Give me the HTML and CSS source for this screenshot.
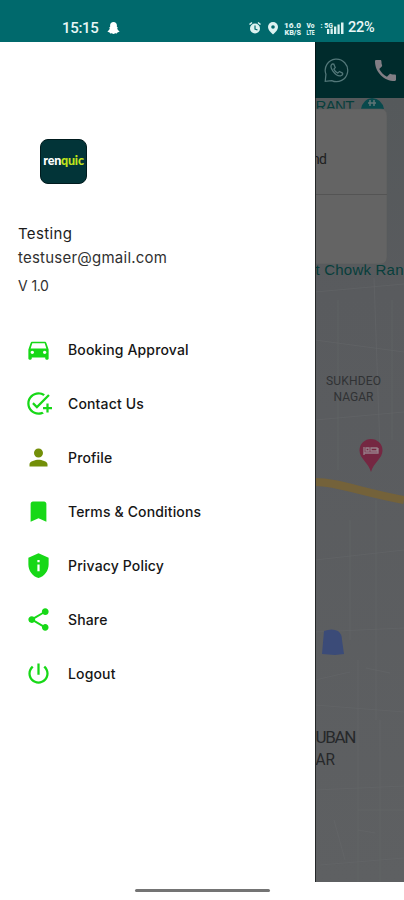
FILE: index.html
```html
<!DOCTYPE html>
<html lang="en">
<head>
<meta charset="utf-8">
<title>renquic</title>
<link rel="stylesheet" href="styles.css">
</head>
<body>
<div class="screen">
  <header class="status">
    <span class="clock">15:15</span>
    <svg class="ghost" viewBox="0 0 12 12"><path d="M6 0C3.900 0 2.600 1.500 2.600 3.200V5L1.600 5.600 2.300 6.500C2 7.700 1.200 8.500 0 9.200.2 10 1.300 10.300 2.100 10.500L2.700 11.400 4.400 11.300C5 11.700 5.400 12 6 12S7 11.700 7.600 11.300L9.300 11.400 9.900 10.500C10.700 10.300 11.800 10 12 9.200 10.800 8.500 10 7.700 9.700 6.500L10.400 5.600 9.400 5V3.200C9.400 1.500 8.100 0 6 0z"/></svg>
    <svg class="signals" viewBox="248 20 98 16">
      <circle cx="255" cy="28.500" r="5"/><path class="line" d="M249.500 24.500 252 22.500M258 22.500 260.500 24.500"/><path class="cut" d="M255 25.500V29L257.500 30"/>
      <path d="M273 22a5 5 0 0 0-5 5c0 3.500 5 7.500 5 7.500s5-4 5-7.500a5 5 0 0 0-5-5z"/><circle class="hole" cx="273" cy="27" r="1.800"/>
      <text class="rate" x="284" y="28" textLength="17" lengthAdjust="spacingAndGlyphs">16.0</text><text x="284.500" y="34.500" textLength="16.500" lengthAdjust="spacingAndGlyphs">KB/S</text>
      <text x="306.500" y="28" textLength="8" lengthAdjust="spacingAndGlyphs">Vo</text><text x="306.500" y="34.500" textLength="8" lengthAdjust="spacingAndGlyphs">LTE</text>
      <text x="320.500" y="27.500" textLength="12.500" lengthAdjust="spacingAndGlyphs">: 5G</text>
      <path d="M327 29h2.300v5H327zM330.500 28.500h2.300V34h-2.300zM334 26.500h2.300V34H334zM337.500 24.500h2.200V34h-2.200zM341 22.500h2.500V34H341z"/>
    </svg>
    <span class="battery">22%</span>
  </header>

  <div class="body">
    <nav class="drawer">
      <div class="logo"><span>ren</span><b>quic</b></div>
      <div class="name">Testing</div>
      <div class="mail">testuser@gmail.com</div>
      <div class="version">V <span>1.0</span></div>
      <ul class="menu">
        <li><svg viewBox="0 0 24 24"><path d="M18.920 6.010C18.720 5.420 18.160 5 17.500 5h-11c-.66 0-1.210.42-1.420 1.010L3 12v8c0 .55.45 1 1 1h1c.55 0 1-.45 1-1v-1h12v1c0 .55.45 1 1 1h1c.55 0 1-.45 1-1v-8l-2.080-5.990zM6.500 16c-.83 0-1.500-.67-1.500-1.500S5.670 13 6.500 13s1.500.67 1.500 1.500S7.330 16 6.500 16zm11 0c-.83 0-1.500-.67-1.500-1.500s.67-1.500 1.500-1.500 1.500.67 1.500 1.500-.67 1.500-1.500 1.500zM5 11l1.500-4.500h11L19 11H5z"/></svg><span>Booking Approval</span></li>
        <li><svg viewBox="0 0 24 24"><path d="M22 5.180 10.590 16.600l-4.240-4.240 1.410-1.410 2.830 2.830 10-10L22 5.180zM12 20c-4.410 0-8-3.590-8-8s3.590-8 8-8c1.570 0 3.040.46 4.280 1.250l1.450-1.450C16.100 2.670 14.130 2 12 2 6.480 2 2 6.480 2 12s4.480 10 10 10c1.730 0 3.360-.44 4.780-1.220l-1.500-1.500c-1 .46-2.110.72-3.280.72zm7-5h-3v2h3v3h2v-3h3v-2h-3v-3h-2v3z"/></svg><span>Contact Us</span></li>
        <li><svg class="olive" viewBox="0 0 24 24"><path d="M12 12c2.210 0 4-1.790 4-4s-1.790-4-4-4-4 1.790-4 4 1.790 4 4 4zm0 2c-2.670 0-8 1.340-8 4v2h16v-2c0-2.660-5.330-4-8-4z"/></svg><span>Profile</span></li>
        <li><svg viewBox="0 0 24 24"><path d="M17 3H7c-1.100 0-1.990.9-1.990 2L5 21l7-3 7 3V5c0-1.100-.9-2-2-2z"/></svg><span>Terms &amp; Conditions</span></li>
        <li><svg viewBox="0 0 24 24"><path d="M12 1 3 5v6c0 5.550 3.840 10.740 9 12 5.160-1.260 9-6.450 9-12V5l-9-4zm-1 6h2v2h-2V7zm0 4h2v6h-2v-6z"/></svg><span>Privacy Policy</span></li>
        <li><svg viewBox="0 0 24 24"><path d="M18 16.080c-.76 0-1.440.3-1.960.77L8.910 12.700c.05-.23.09-.46.09-.7s-.04-.47-.09-.7l7.050-4.110c.54.5 1.250.81 2.040.81 1.660 0 3-1.340 3-3s-1.340-3-3-3-3 1.340-3 3c0 .24.04.47.09.7L8.040 9.810C7.500 9.310 6.790 9 6 9c-1.660 0-3 1.340-3 3s1.340 3 3 3c.79 0 1.500-.31 2.040-.81l7.120 4.160c-.05.21-.08.43-.08.65 0 1.610 1.310 2.920 2.920 2.920s2.920-1.310 2.920-2.920-1.310-2.920-2.920-2.920z"/></svg><span>Share</span></li>
        <li><svg viewBox="0 0 24 24"><path d="M13 3h-2v10h2V3zm4.830 2.170-1.420 1.420C17.990 7.860 19 9.810 19 12c0 3.870-3.130 7-7 7s-7-3.130-7-7c0-2.190 1.010-4.140 2.580-5.420L6.170 5.170C4.230 6.820 3 9.260 3 12c0 4.970 4.030 9 9 9s9-4.030 9-9c0-2.740-1.230-5.180-3.170-6.830z"/></svg><span>Logout</span></li>
      </ul>
    </nav>

    <main class="under">
      <div class="bar">
        <svg class="wa" viewBox="0 0 26 26"><path d="M1.300 24.700 2 17.500A11.700 11.700 0 1 1 8 24z"/><path d="M8.500 6.700c-4 3 3.500 13.500 9 12.300 2-.6 2.300-2.300 1.800-2.800L16 14.500l-1.600 1.700c-2-.8-3.400-2.300-4.200-4.200l1.500-1.500-1.500-3.600z"/></svg>
        <svg class="call" viewBox="3 3 18 18"><path d="M6.620 10.790c1.440 2.830 3.760 5.140 6.590 6.590l2.200-2.200c.27-.27.67-.36 1.020-.24 1.120.37 2.330.57 3.570.57.55 0 1 .45 1 1V20c0 .55-.45 1-1 1-9.390 0-17-7.610-17-17 0-.55.45-1 1-1h3.500c.55 0 1 .45 1 1 0 1.250.2 2.450.57 3.570.11.35.03.74-.25 1.020l-2.200 2.200z"/></svg>
      </div>
      <svg class="map" viewBox="315 98 89 784">
        <defs><linearGradient id="ground" x1="0" y1="0" x2="0" y2="1"><stop offset="0" stop-color="#55595b"/><stop offset=".25" stop-color="#595b5e"/><stop offset="1" stop-color="#5e6062"/></linearGradient></defs>
        <rect x="315" y="98" width="89" height="784" fill="url(#ground)"/>
        <g class="roads"><path d="M315 292 404 284M338 300V470M374 278 380 450M315 340 404 352M392 300V440M315 420 404 412M350 520V640M376 500V720M315 560 404 550M315 632 404 628M315 680 350 672M366 668 390 673M358 660V882M315 790 404 786M380 720V882M358 810H404M334 820 345 860M315 705 404 712M358 830 375 833M320 865 404 858"/></g>
        <path class="highway" d="M315 482C338 482 360 492 404 500"/>
        <text class="teal" x="315.500" y="111" textLength="39">RANT</text><path class="tealfill" d="M361 109Q363 99 372 98Q382 99 384 109z"/><path class="glyph" d="M368 103H376M370 100V106M374 100V106"/>
        <text class="teal" x="315.500" y="275" textLength="88">t Chowk Ran</text>
        <path class="card" d="M315 109H381Q387 109 387 116V257Q387 264 380 264H315z"/><path class="rule" d="M315 194.500H387"/>
        <text class="cardtext" x="312" y="164" textLength="15">nd</text>
        <text class="area" x="326" y="385" textLength="55">SUKHDEO</text><text class="area" x="333.500" y="401" textLength="40">NAGAR</text>
        <path class="pin" d="M371 439a11.500 11.500 0 0 0-11.500 11.500c0 8 9 12 11.500 21.500 2.500-9.500 11.500-13.500 11.500-21.500A11.500 11.500 0 0 0 371 439z"/><path class="bed" d="M364 447V455M364 453H378V448M366 448H369V451H366zM371 448H377V451H371z"/>
        <path class="pond" d="M324 631Q332 628 338 631Q342 634 342 640L344 654 335 655 322 654z"/>
        <text class="town" x="315.500" y="743" textLength="41">UBAN</text><text class="town" x="315.500" y="765" textLength="19.500" lengthAdjust="spacingAndGlyphs">AR</text>
        <path class="edge" d="M315.500 98V882"/>
      </svg>
    </main>
  </div>
  <footer class="home"><i></i></footer>
</div>
</body>
</html>
```
FILE: styles.css
```css
* { box-sizing: border-box; }
body { margin: 0; background: #fff; font-family: Inter, "Liberation Sans", sans-serif; }
.screen { width: 404px; height: 900px; display: flex; flex-direction: column; overflow: hidden; }
.status { height: 42px; flex: none; background: #00696c; color: #e9f7f6; display: flex; align-items: center; padding: 14px 0 0 62px; font: 500 15px/20px Roboto, sans-serif; }
.clock { width: 45px; letter-spacing: -.3px; }
.ghost { width: 13px; height: 12px; fill: #fff; margin-right: 128px; }
.signals { width: 98px; height: 16px; fill: #dcf2f1; }
.signals text { font: 900 7px Roboto, sans-serif; }
.signals .rate { font-size: 8px; }
.signals .line { stroke: #dcf2f1; stroke-width: 1.6; fill: none; }
.signals .cut { stroke: #00696c; stroke-width: 1.2; fill: none; }
.signals .hole { fill: #00696c; }
.battery { margin-left: 2px; font-size: 14.5px; letter-spacing: -.3px; }
.body { height: 840px; display: flex; flex: none; }
.drawer { width: 315px; background: #fff; padding: 97px 0 0 18px; flex: none; }
.logo { width: 47px; height: 45px; margin-left: 22px; border-radius: 8px; background: #023438; border: 1px solid #001b1e; color: #fff; display: flex; align-items: center; justify-content: center; font: 900 12.5px/1 Lato, sans-serif; letter-spacing: -.2px; }
.logo b { color: #bfe31c; font-weight: 900; }
.name { margin-top: 38px; font-size: 15px; line-height: 24px; letter-spacing: .35px; color: #1c1c1c; }
.mail { font-size: 15px; line-height: 24px; letter-spacing: .23px; color: #303030; }
.version { margin-top: 4px; font-size: 14px; line-height: 24px; color: #303030; }
.version span { letter-spacing: -.5px; }
.menu { list-style: none; margin: 24px 0 0; padding: 0 0 0 7px; }
.menu li { height: 54px; display: flex; align-items: center; gap: 16px; font-size: 14px; font-weight: 450; letter-spacing: .15px; color: #161616; white-space: nowrap; }
.menu svg { width: 27px; height: 27px; fill: #17d817; flex: none; }
.menu .olive { fill: #738f08; }
.under { width: 89px; display: flex; flex-direction: column; overflow: hidden; }
.bar { height: 56px; background: #002b2c; display: flex; align-items: center; padding-left: 8px; flex: none; border-left: 1px solid #001516; }
.wa { width: 25px; height: 26px; margin-right: 26px; fill: none; stroke: #53787a; stroke-width: 1.3; flex: none; }
.call { width: 21px; height: 21px; fill: #827e85; flex: none; }
.map { width: 89px; height: 784px; display: block; }
.roads { fill: none; stroke: #686a6b; stroke-width: .8; opacity: .55; }
.highway { fill: none; stroke: #74623a; stroke-width: 8; }
.map text { font-family: Roboto, sans-serif; }
.map .teal { fill: #073e3b; font-size: 15px; font-family: "Liberation Sans", sans-serif; }
.tealfill { fill: #08494c; }
.glyph { fill: none; stroke: #5f7476; stroke-width: 1.5; }
.card { fill: #646464; stroke: #595b5b; stroke-width: .6; }
.rule { stroke: #545454; }
.map .cardtext { fill: #202020; font-size: 14px; }
.map .area { fill: #303234; font-size: 12px; }
.pin { fill: #752742; }
.bed { fill: none; stroke: #98808a; stroke-width: 1.3; }
.pond { fill: #3b4b78; }
.map .town { fill: #26282a; font-size: 17px; }
.edge { stroke: #252829; }
.home { height: 18px; flex: none; padding: 7px 0 0 135px; }
.home i { display: block; width: 135px; height: 3px; border-radius: 2px; background: #747474; }
```
